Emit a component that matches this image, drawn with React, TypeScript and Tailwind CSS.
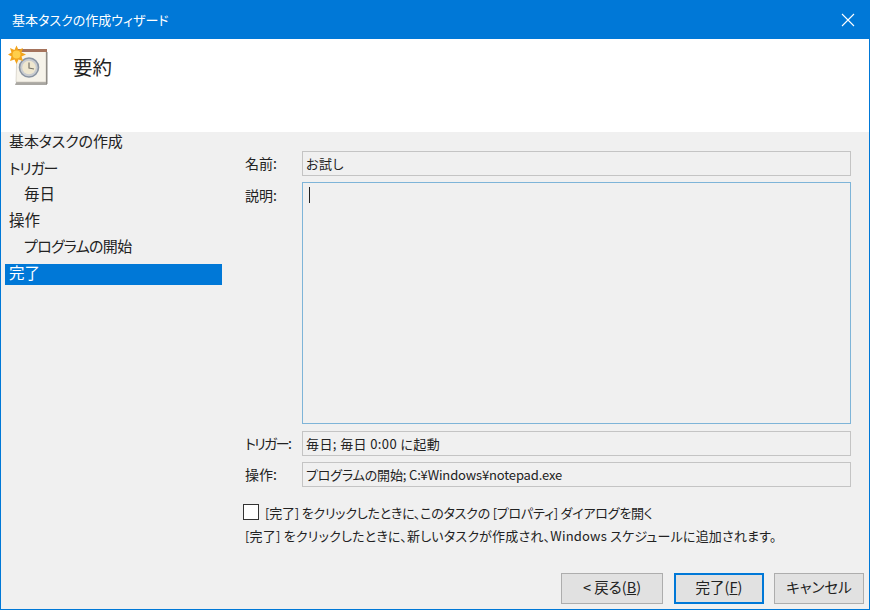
const font = { fontFamily: '"Noto Sans CJK JP", "Noto Sans", sans-serif' };

const steps = [
  { label: '基本タスクの作成', indent: false, text: 'text-[15px] tracking-[-0.1px] pb-[4px]' },
  { label: 'トリガー', indent: false, text: 'text-[15px] tracking-[-1.2px] pb-[3px]' },
  { label: '毎日', indent: true, text: 'text-[15.5px] pb-[1px]' },
  { label: '操作', indent: false, text: 'text-[15.5px] pb-[1px]' },
  { label: 'プログラムの開始', indent: true, text: 'text-[15px] tracking-[-0.7px] pb-[3px]' },
  { label: '完了', indent: false, selected: true, text: 'text-[15.5px] pb-[3px]' },
];

function TaskIcon() {
  return (
    <svg width="40" height="42" viewBox="0 0 40 42">
      <path d="M10 8 L39 8 L39 40 L7 40 L9 35 Z" fill="#a9a7a2" />
      <path d="M9 6 L38 6 L38 37 L8 37 Z" fill="#f6f3ea" stroke="#c9c4b8" strokeWidth="0.6" />
      <rect x="9" y="4" width="30" height="3" fill="#a5735c" />
      <rect x="38" y="7" width="1.5" height="32" fill="#8f8c86" />
      <circle cx="21" cy="22.5" r="9.5" fill="#c9ccd0" stroke="#8993a1" strokeWidth="1.6" />
      <circle cx="21" cy="22.5" r="6.8" fill="#efe7cf" />
      <path d="M21 17.5 L21 23 L26 24" fill="none" stroke="#77746a" strokeWidth="1.2" />
      <path d="M8.5 0.5 L10.5 5 L15 3 L13.5 7.5 L18 9.5 L13.5 11.5 L15 16 L10.5 14.5 L8.5 19 L6.5 14.5 L2 16 L3.5 11.5 L0 9.5 L3.5 7.5 L2 3 L6.5 5 Z" fill="#f3a41b" />
      <circle cx="8.5" cy="9.5" r="4" fill="#ffcf4a" />
    </svg>
  );
}

function Field({ label, labelClass, textClass, children }: { label: string; labelClass?: string; textClass?: string; children: React.ReactNode }) {
  return (
    <div className="flex items-center h-[25px]">
      <div className={`w-[57px] shrink-0 text-[14px] text-[#222] whitespace-nowrap ${labelClass ?? ''}`}>{label}</div>
      <div className={`flex-1 h-full border border-[#c4c4c4] bg-[#f0f0f0] px-[3px] flex items-center text-[13px] text-[#222] leading-none pb-[1px] ${textClass ?? ''}`}>
        {children}
      </div>
    </div>
  );
}

function Button({ children, primary, className }: { children: React.ReactNode; primary?: boolean; className: string }) {
  return (
    <button
      className={`h-[31px] flex items-center justify-center text-[14.5px] leading-none pb-[2px] text-[#222] bg-[#e1e1e1] ${primary ? 'border-2 border-[#0078d7]' : 'border border-[#adadad]'} ${className}`}
    >
      {children}
    </button>
  );
}

export default function App() {
  return (
    <div style={font} className="w-[870px] h-[610px] flex flex-col bg-[#f0f0f0] border-x border-b border-[#0078d7] overflow-hidden [font-feature-settings:'palt']">
      {/* Title bar */}
      <div className="h-[39px] shrink-0 -mx-[1px] bg-[#0078d7] flex items-center justify-between pl-[12px] pr-[15px] text-white">
        <span className="text-[13px] leading-none">基本タスクの作成ウィザード</span>
        <svg width="14" height="14" viewBox="0 0 14 14" stroke="#fff" strokeWidth="1.1">
          <path d="M1 1 L13 13 M13 1 L1 13" />
        </svg>
      </div>

      {/* Header */}
      <div className="h-[93px] shrink-0 bg-white flex items-start">
        <div className="ml-[7px] mt-[6px] w-[40px]">
          <TaskIcon />
        </div>
        <div className="ml-[25px] mt-[14px] text-[19.5px] leading-[28px] text-[#222]">要約</div>
      </div>

      <div className="flex flex-1 min-h-0">
        {/* Steps */}
        <div className="w-[217px] ml-[4px] shrink-0 flex flex-col gap-[5px]">
          {steps.map((s) => (
            <div
              key={s.label}
              className={`h-[21px] flex items-center leading-none ${s.text} ${s.selected ? 'bg-[#0078d7] text-white mt-[2px]' : 'text-[#222]'} ${s.indent ? 'pl-[19px]' : 'pl-[4px]'}`}
            >
              {s.label}
            </div>
          ))}
        </div>

        {/* Summary */}
        <div className="flex-1 flex flex-col pl-[23px] pr-[18px] pt-[19px]">
          <Field label="名前:" textClass="tracking-[0.5px]">お試し</Field>
          <div className="flex mt-[6px] h-[242px]">
            <div className="w-[57px] shrink-0 text-[14px] text-[#222] pt-[3px]">説明:</div>
            <div className="flex-1 border border-[#7eb4d8] bg-[#f0f0f0] pl-[6px] pt-[4px]">
              <div className="w-[1px] h-[16px] bg-[#222]" />
            </div>
          </div>
          <div className="flex flex-col gap-[6px] mt-[7px]">
            <Field label="トリガー:" labelClass="tracking-[-1.6px]" textClass="tracking-[0.4px]">毎日; 毎日 0:00 に起動</Field>
            <Field label="操作:" textClass="tracking-[-0.15px]">プログラムの開始; C:¥Windows¥notepad.exe</Field>
          </div>
          <div className="flex items-center mt-[16px] h-[18px] -ml-[2px]">
            <div className="w-[16px] h-[16px] border border-[#333] bg-white shrink-0" />
            <span className="ml-[6px] text-[13px] leading-none tracking-[-0.22px] text-[#222] whitespace-nowrap">[完了] をクリックしたときに、このタスクの [プロパティ] ダイアログを開く</span>
          </div>
          <div className="mt-[6px] text-[13px] leading-[18px] tracking-[0.2px] text-[#222] whitespace-nowrap">
            [完了] をクリックしたときに、新しいタスクが作成され、Windows スケジュールに追加されます。
          </div>
          <div className="flex mt-auto mb-[5px] -mr-[13px] justify-end gap-[10px]">
            <Button className="w-[102px] mr-[1px]">&lt; 戻る(<span className="underline">B</span>)</Button>
            <Button primary className="w-[90px]">完了(<span className="underline">F</span>)</Button>
            <Button className="w-[90px]">キャンセル</Button>
          </div>
        </div>
      </div>
    </div>
  );
}
